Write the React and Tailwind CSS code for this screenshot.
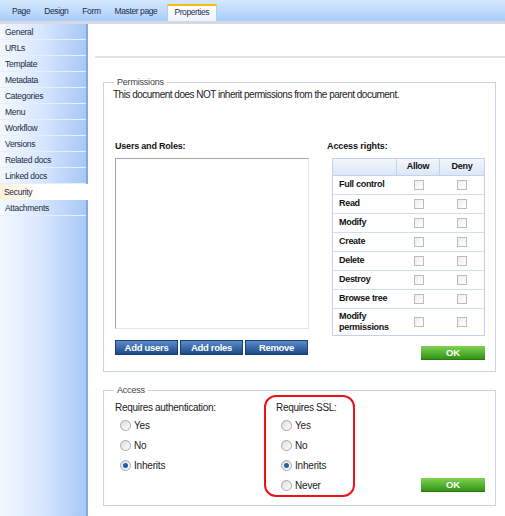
import React from 'react';

const tabs = ['Page', 'Design', 'Form', 'Master page', 'Properties'];
const sideItems = ['General', 'URLs', 'Template', 'Metadata', 'Categories', 'Menu', 'Workflow', 'Versions', 'Related docs', 'Linked docs', 'Security', 'Attachments'];
const rights = ['Full control', 'Read', 'Modify', 'Create', 'Delete', 'Destroy', 'Browse tree'];

function Check() {
  return <span className="block w-[10px] h-[10px] border border-[#bcbcbc] bg-gradient-to-br from-[#eeeeee] to-white" />;
}

function Radio({ checked, label }) {
  return (
    <div className="flex items-center gap-[3px] h-[20px]">
      <span className="w-[11px] h-[11px] rounded-full border border-[#a8a8a8] bg-gradient-to-br from-[#dcdcdc] to-white flex items-center justify-center">
        {checked && <span className="w-[5px] h-[5px] rounded-full bg-[#1f5fa8]" />}
      </span>
      <span className="text-[10px] tracking-[-0.2px] text-[#222]">{label}</span>
    </div>
  );
}

function BlueBtn({ children }) {
  return (
    <button className="w-[63px] h-[15px] bg-gradient-to-b from-[#5b8ccb] to-[#1c4a8a] border border-[#1c3f73] text-white text-[9.5px] tracking-[-0.3px] font-bold leading-none">
      {children}
    </button>
  );
}

function OkBtn() {
  return (
    <button className="w-[64px] h-[14px] bg-gradient-to-b from-[#7fd451] to-[#2f9413] border-b border-[#2a7a10] text-white text-[9.5px] font-bold leading-none">
      OK
    </button>
  );
}

export default function App() {
  return (
    <div className="w-[505px] h-[516px] overflow-hidden bg-white flex flex-col text-[#111]" style={{ fontFamily: '"Liberation Sans", Arial, sans-serif' }}>
      {/* tab bar */}
      <div className="h-[24px] shrink-0 bg-gradient-to-b from-[#d6e8fd] to-[#a9cdf9] border-b-[3px] border-[#d3d9e6] flex items-end pl-[5px]">
        {tabs.map((t) => (
          <div
            key={t}
            className={
              t === 'Properties'
                ? 'h-[17px] ml-[3px] pl-[6px] pr-[7px] bg-gradient-to-b from-white to-[#eef4fc] border-t-2 border-[#f2c200] border-x border-x-[#b8cde8] text-[8.5px] tracking-[-0.4px] leading-[13px] text-[#1d2d4a]'
                : 'h-[17px] px-[7px] text-[8.5px] tracking-[-0.4px] leading-[15px] text-[#1d2d4a]'
            }
          >
            {t}
          </div>
        ))}
      </div>

      <div className="flex flex-1 min-h-0">
        {/* sidebar */}
        <div className="w-[88px] shrink-0 bg-gradient-to-r from-[#f4f8ff] via-[#d6e6fd] to-[#a6c7f7] border-r-2 border-[#86a9e2]">
          {sideItems.map((s) => (
            <div
              key={s}
              className={
                s === 'Security'
                  ? 'h-[16px] pl-[4px] text-[8.5px] tracking-[-0.3px] leading-[16px] bg-gradient-to-r from-[#fdf1da] via-white to-white -mr-[2px] text-[#1b2a44]'
                  : 'h-[16px] pl-[5px] text-[8.5px] tracking-[-0.3px] leading-[16px] text-[#1b2a44] border-b border-[#e4eefc]'
              }
            >
              {s}
            </div>
          ))}
        </div>

        {/* main */}
        <div className="flex-1 min-w-0 flex flex-col">
          <div className="h-[34px] shrink-0 border-b-2 border-[#e2e2e2] ml-[7px]" />

          <fieldset className="ml-[15px] mr-[9px] mt-[18px] border border-[#c9d5ea] px-[9px] pb-[11px]">
            <legend className="ml-[1px] px-[3px] text-[9px] tracking-[-0.2px] leading-[12px] text-[#444]">Permissions</legend>
            <div className="text-[10px] tracking-[-0.5px] leading-[12px] mt-[1px] text-[#222]">This document does NOT inherit permissions from the parent document.</div>

            <div className="flex mt-[37px] gap-[18px]">
              <div className="w-[196px] pl-[2px]">
                <div className="text-[9px] tracking-[-0.2px] font-bold h-[20px] leading-[16px]">Users and Roles:</div>
                <div className="h-[171px] border border-[#a6a6a6] border-r-[#e6e6e6] border-b-[#e6e6e6]" />
                <div className="flex gap-[2px] mt-[11px]">
                  <BlueBtn>Add users</BlueBtn>
                  <BlueBtn>Add roles</BlueBtn>
                  <BlueBtn>Remove</BlueBtn>
                </div>
              </div>

              <div className="flex-1">
                <div className="text-[9px] tracking-[-0.1px] font-bold h-[20px] leading-[16px]">Access rights:</div>
                <div className="ml-[5px] w-[153px] border border-[#c2d2ec]">
                  <div className="flex h-[17px] bg-gradient-to-b from-[#f3f7fd] to-[#dbe6f7] border-b border-[#c2d2ec] text-[9px] tracking-[-0.3px] font-bold">
                    <div className="w-[64px] border-r border-[#c2d2ec]" />
                    <div className="w-[43px] border-r border-[#c2d2ec] flex items-center justify-center">Allow</div>
                    <div className="flex-1 flex items-center justify-center">Deny</div>
                  </div>
                  {rights.map((r) => (
                    <div key={r} className="flex h-[19px] items-center border-b border-[#d2ddef] text-[9px] tracking-[-0.3px] font-bold">
                      <div className="w-[64px] pl-[6px]">{r}</div>
                      <div className="w-[43px] flex justify-center"><Check /></div>
                      <div className="flex-1 flex justify-center"><Check /></div>
                    </div>
                  ))}
                  <div className="flex h-[26px] items-center text-[9px] tracking-[-0.3px] font-bold">
                    <div className="w-[64px] pl-[6px] leading-[11px]">Modify<br />permissions</div>
                    <div className="w-[43px] flex justify-center"><Check /></div>
                    <div className="flex-1 flex justify-center"><Check /></div>
                  </div>
                </div>
                <div className="flex justify-end mt-[10px] pr-[1px]">
                  <OkBtn />
                </div>
              </div>
            </div>
          </fieldset>

          <fieldset className="ml-[15px] mr-[9px] mt-[12px] border border-[#c9d5ea] px-[9px] pb-[8px]">
            <legend className="ml-[1px] px-[3px] text-[9px] tracking-[-0.2px] leading-[12px] text-[#444]">Access</legend>
            <div className="flex items-start">
              <div className="w-[151px] pt-[5px] pl-[2px]">
                <div className="text-[10px] tracking-[-0.3px] text-[#222] h-[14px] leading-[14px]">Requires authentication:</div>
                <div className="pl-[5px]">
                  <Radio label="Yes" />
                  <Radio label="No" />
                  <Radio checked label="Inherits" />
                </div>
              </div>
              <div className="w-[91px] h-[102px] -mt-[1px] border-2 border-[#e8141a] rounded-[12px] pl-[10px] pt-[4px]">
                <div className="text-[10px] tracking-[-0.3px] text-[#222] h-[14px] leading-[14px]">Requires SSL:</div>
                <div className="pl-[5px]">
                  <Radio label="Yes" />
                  <Radio label="No" />
                  <Radio checked label="Inherits" />
                  <Radio label="Never" />
                </div>
              </div>
              <div className="flex-1 self-end flex justify-end pb-[5px] pr-[1px]">
                <OkBtn />
              </div>
            </div>
          </fieldset>
        </div>
      </div>
    </div>
  );
}
